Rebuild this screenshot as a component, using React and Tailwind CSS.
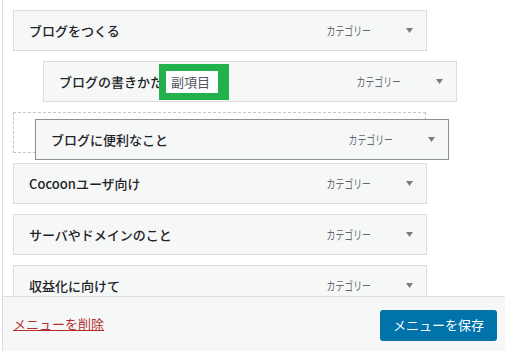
import React from "react";

const font = { fontFamily: '"Noto Sans CJK JP", "Noto Sans", sans-serif' };

function Arrow() {
  return (
    <svg width="7" height="5" viewBox="0 0 7 5" className="ml-[35px] mr-[13px]">
      <polygon points="0,0 7,0 3.5,5" fill="#787c82" />
    </svg>
  );
}

function Item({ title, className = "", children }) {
  return (
    <div
      className={
        "relative flex h-[41px] w-[414px] shrink-0 items-center border bg-[#f6f7f7] pl-[15px] " +
        className
      }
    >
      <span className="text-[13px] font-medium text-[#1d2327]">{title}</span>
      <span className="ml-auto origin-right scale-x-[0.74] text-[12px] whitespace-nowrap text-[#646970]">カテゴリー</span>
      <Arrow />
      {children}
    </div>
  );
}

export default function App() {
  return (
    <div style={font} className="ml-[2px] flex h-[351px] w-[503px] flex-col border-l border-[#dcdcde] bg-white">
      <div className="flex h-[296px] flex-col gap-[10px] overflow-hidden pl-[10px] pt-[10px]">
        <Item title="ブログをつくる" className="border-[#dcdcde]" />
        <Item title="ブログの書きかた" className="ml-[30px] border-[#dcdcde]">
          <div className="absolute left-[115px] top-[2px] flex h-[36px] w-[70px] bg-[#22b14c] pb-[7px] pl-[7px] pr-[11px] pt-[7px]">
            <div className="flex flex-1 items-center bg-white pl-[5px] text-[13px] text-[#50575e]">副項目</div>
          </div>
        </Item>
        <div className="relative h-[41px] w-[413px] shrink-0 border border-dashed border-[#c3c4c7]">
          <div className="absolute left-[21px] top-[6px]">
            <Item title="ブログに便利なこと" className="border-[#8c8f94]" />
          </div>
        </div>
        <Item title="Cocoonユーザ向け" className="border-[#dcdcde]" />
        <Item title="サーバやドメインのこと" className="border-[#dcdcde]" />
        <Item title="収益化に向けて" className="border-[#dcdcde]" />
      </div>
      <div className="flex flex-1 items-center justify-between border-t border-[#dcdcde] bg-[#f6f7f7] pl-[10px] pr-[8px]">
        <a href="#" className="text-[13px] text-[#b32d2e] underline">
          メニューを削除
        </a>
        <button className="mt-[2px] h-[31px] w-[117px] rounded-[3px] bg-[#0073aa] text-[13px] text-white">
          メニューを保存
        </button>
      </div>
    </div>
  );
}
